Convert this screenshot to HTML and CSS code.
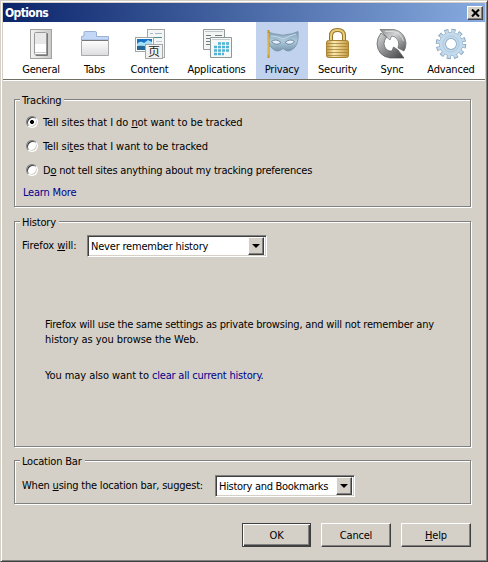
FILE: index.html
```
<!DOCTYPE html>
<html lang="en">
<head>
<meta charset="utf-8">
<title>Options</title>
<link rel="stylesheet" href="styles.css">
</head>
<body>
<div class="window">
  <header class="titlebar">
    <span class="title">Options</span>
    <button class="close" aria-label="Close"><svg width="9" height="8" viewBox="0 0 9 8"><path d="M1 .5L8 7.500M8 .5L1 7.500" stroke="#000" stroke-width="2.100"/></svg></button>
  </header>
  <nav class="toolbar">
    <div class="tab general">
      <svg width="32" height="32" viewBox="0 0 32 32">
        <defs><linearGradient id="gp" x2="1"><stop stop-color="#f2f2f1"/><stop offset="1" stop-color="#c9c9c8"/></linearGradient></defs>
        <rect x="5.500" y="1.500" width="21" height="29" fill="url(#gp)" stroke="#a2a29f"/>
        <rect x="10.500" y="5" width="12.500" height="23" rx="1" fill="#777"/>
        <rect x="9.500" y="4.500" width="12" height="22" rx="1" fill="#fff" stroke="#999"/>
        <rect x="10" y="5" width="11" height="11" fill="#e8e8e8"/>
        <path d="M10 24.500h11" stroke="#ccc"/>
      </svg>
      <span class="label">General</span>
    </div>
    <div class="tab tabs">
      <svg width="32" height="32" viewBox="0 0 32 32">
        <defs><linearGradient id="tp" x2="0" y2="1"><stop stop-color="#fff"/><stop offset="1" stop-color="#dcdcde"/></linearGradient></defs>
        <path d="M2.500 12V8.500L5 8V4.500Q5 3.500 6 3.500H16.500Q17.500 3.500 17.500 5V8.500H29.500V12Z" fill="#c3d7f7" stroke="#9bb0d2"/>
        <path d="M2.500 12.500H29.500V27.500H2.500Z" fill="url(#tp)" stroke="#a9a9ab"/>
        <path d="M3 12.500H29" stroke="#77777a"/>
      </svg>
      <span class="label">Tabs</span>
    </div>
    <div class="tab content">
      <svg width="32" height="32" viewBox="0 0 32 32">
        <rect x="13.500" y="1.500" width="17" height="28" fill="#f4f5f5" stroke="#a3a7a7"/>
        <path d="M21 5.500h7M16 5.500h3" stroke="#aab6cb"/>
        <path d="M16 9.500h12" stroke="#4c918e"/>
        <path d="M22 13.500h6" stroke="#c2cbd8"/>
        <rect x="1.500" y="9.500" width="18" height="14" fill="#fff" stroke="#a2a5a6"/>
        <path d="M3 11H18V22H3Z" fill="#1671c5"/>
        <path d="M3 16Q6 12 10 15L14 12L18 14V19H3Z" fill="#a5dff7"/>
        <path d="M3 18Q9 17 13 19H18V22H3Z" fill="#246694"/>
        <rect x="11.500" y="16.500" width="17" height="14" fill="#f1f2f2" stroke="#a5a8a8"/>
        <text x="14" y="28" class="glyph" lang="zh-CN">页</text>
      </svg>
      <span class="label">Content</span>
    </div>
    <div class="tab applications">
      <svg width="32" height="32" viewBox="0 0 32 32">
        <path d="M2.500 1.500H23.500V21.500H2.500Z" fill="#f3f5f5" stroke="#929b9b"/>
        <path d="M4 3.500H22" stroke="#c0c6c6"/>
        <path d="M5 7.500h5M5 10.500h4M5 13.500h5M5 16.500h4M14 7.500h7" stroke="#717c7d"/>
        <path d="M9.500 9.500H30.500V29.500H9.500Z" fill="#f6f8f8" stroke="#8c9797"/>
        <path d="M11 11.500H29" stroke="#c7cccd"/>
        <path d="M17 15.500H28M13 19H28M13 22.500H28M13 26H23" stroke="#50b2d4" stroke-width="2.500" stroke-dasharray="3 1"/>
      </svg>
      <span class="label">Applications</span>
    </div>
    <div class="tab privacy selected">
      <svg width="34" height="32" viewBox="0 0 34 32">
        <defs><linearGradient id="mp" x2="0" y2="1"><stop stop-color="#7e9fb9"/><stop offset=".5" stop-color="#b0c9da"/><stop offset="1" stop-color="#7596ae"/></linearGradient></defs>
        <path d="M3 4Q8 6 14 6.500Q18 8 22 6.500Q28 6 33 3.500Q34 14 30 19Q25 24.500 21 22.500L18 20.500L15 22.500Q10 24.500 6 19Q2 15 3 4Z" fill="url(#mp)" stroke="#7893a8" stroke-width=".8"/>
        <path d="M6.500 13.500Q11 10 16 14.500Q11 18.500 6.500 13.500ZM20 14.500Q25 10 29.500 13.500Q25 18.500 20 14.500Z" fill="#e6effa" stroke="#5f7c94" stroke-width=".8"/>
        <path d="M6 8Q13 8 18 11Q24 8 31 6" fill="none" stroke="#c3d8e5"/>
        <path d="M3.500 2V30" stroke="#c4942f" stroke-width="2"/><path d="M3 5V27" stroke="#f1ce66"/>
      </svg>
      <span class="label">Privacy</span>
    </div>
    <div class="tab security">
      <svg width="32" height="32" viewBox="0 0 32 32">
        <defs><linearGradient id="lp" x2="1"><stop stop-color="#c39a43"/><stop offset=".35" stop-color="#f8ebb2"/><stop offset="1" stop-color="#c4973c"/></linearGradient></defs>
        <path d="M9 14V8Q9 2 15.500 2T22 8V14" fill="none" stroke="#987329" stroke-width="4"/>
        <path d="M9 14V8Q9 2 15.500 2T22 8V14" fill="none" stroke="#e9ce7c" stroke-width="2"/>
        <rect x="4.500" y="12.500" width="22" height="17" rx="2" fill="url(#lp)" stroke="#aa8235"/>
        <path d="M5 15.500H26M5 18.500H26M5 21.500H26M5 24.500H26M5 27.500H26" stroke="#a88235" stroke-width=".8"/>
      </svg>
      <span class="label">Security</span>
    </div>
    <div class="tab sync">
      <svg width="32" height="32" viewBox="0 0 32 32">
        <defs>
          <linearGradient id="sa" x1="0" y1="0" x2="1" y2="1"><stop stop-color="#8d8f90"/><stop offset=".4" stop-color="#d3d4d5"/><stop offset="1" stop-color="#57595b"/></linearGradient>
          <linearGradient id="sb" x1="0" y1="0" x2="1" y2="1"><stop stop-color="#dcdddd"/><stop offset=".5" stop-color="#8a8c8e"/><stop offset="1" stop-color="#3e4042"/></linearGradient>
        </defs>
        <path d="M4 1.500H18Q29 4 30 15Q30 20 28 23L22 20Q24.500 12 18 8.500L15.500 8L14 12L10 8.500Z" fill="url(#sa)" stroke="#66686a" stroke-width=".7"/>
        <path d="M28 30H14Q2 28 1 16Q1 10 5 5L10.500 9Q5.500 16 10.500 21.500Q13 23.500 16 23L17.500 19L22 22Z" fill="url(#sb)" stroke="#55575a" stroke-width=".7"/>
        <path d="M9 3.500H17Q25 5 27.500 13" fill="none" stroke="#e4e5e5" stroke-width=".8"/>
      </svg>
      <span class="label">Sync</span>
    </div>
    <div class="tab advanced">
      <svg width="32" height="32" viewBox="0 0 32 32">
        <circle cx="16" cy="16" r="13" fill="none" stroke="#88a6c0" stroke-width="4.500" stroke-dasharray="4 2.807"/>
        <circle cx="16" cy="16" r="8.500" fill="none" stroke="#8caac4" stroke-width="7"/>
        <circle cx="16" cy="16" r="12.700" fill="none" stroke="#c3d9ec" stroke-width="3.200" stroke-dasharray="2.700 3.950" stroke-dashoffset="-.6"/>
        <circle cx="16" cy="16" r="8.700" fill="none" stroke="#c3d9ec" stroke-width="5.600"/>
        <circle cx="16" cy="16" r="8" fill="none" stroke="#afcae0"/>
      </svg>
      <span class="label">Advanced</span>
    </div>
  </nav>
  <main class="pane">
    <section class="group tracking">
      <h2 class="legend">Tracking</h2>
      <label class="radio"><span class="dot on"></span><span class="loose">Tell sites that I do <u>n</u>ot want to be tracked</span></label>
      <label class="radio"><span class="dot"></span><span class="loose">Tell si<u>t</u>es that I want to be tracked</span></label>
      <label class="radio"><span class="dot"></span><span>D<u>o</u> not tell sites anything about my tracking preferences</span></label>
      <a class="link learn">Learn More</a>
    </section>
    <section class="group history">
      <h2 class="legend">History</h2>
      <div class="field"><span class="caption loose">Firefox <u>w</u>ill:</span><div class="select wide"><span class="value">Never remember history</span><span class="arrow"></span></div></div>
      <p class="note">Firefox will use the same settings as private browsing, and will not remember any<br><span class="loose">history as you browse the Web.</span></p>
      <p class="note last"><span class="loose">You may also want to </span><a class="link">clear all current history</a>.</p>
    </section>
    <section class="group location">
      <h2 class="legend">Location Bar</h2>
      <div class="field"><span class="caption suggest">When <u>u</u>sing the location bar, suggest:</span><div class="select"><span class="value tight">History and Bookmarks</span><span class="arrow"></span></div></div>
    </section>
    <footer class="buttons">
      <button class="button default">OK</button>
      <button class="button">Cancel</button>
      <button class="button"><u>H</u>elp</button>
    </footer>
  </main>
</div>
</body>
</html>
```
FILE: styles.css
```
* { box-sizing: border-box; }
body { margin: 0; font: 11px/15px "DejaVu Sans Condensed", "DejaVu Sans", sans-serif; font-stretch: condensed; color: #000; letter-spacing: -.2px; }
.window { width: 488px; height: 562px; background: #d4d0c8; border: 1px solid; border-color: #d4d0c8 #404040 #404040 #d4d0c8; box-shadow: inset 1px 1px #fff, inset -1px -1px #808080; padding: 2px; white-space: nowrap; }
.titlebar { height: 19px; display: flex; align-items: center; justify-content: space-between; padding: 1px 2px 0 2px; background: linear-gradient(90deg, #0a246a, #87abe0); color: #fff; }
.title { font-weight: bold; font-size: 12px; letter-spacing: -.6px; }
.close { width: 16px; height: 14px; padding: 0; background: #d4d0c8; border: 1px solid; border-color: #fff #404040 #404040 #fff; box-shadow: inset -1px -1px #808080; display: flex; align-items: center; justify-content: center; }
.close svg { flex: none; }
.toolbar { display: flex; height: 57px; padding-left: 12px; background: #fff; }
.tab { display: flex; flex-direction: column; align-items: center; padding-top: 6px; }
.tab svg { display: block; height: 32px; flex: none; }
.label { line-height: 16px; margin-top: 2px; }
.general { width: 52px; }
.tabs { width: 55px; }
.content { width: 55px; }
.applications { width: 79px; }
.privacy { width: 52px; }
.security { width: 59px; }
.sync { width: 50px; }
.advanced { width: 68px; }
.selected { background: #c1d2ee; }
.glyph { font: 12px "Noto Sans CJK SC", sans-serif; letter-spacing: 0; fill: #292929; }
.pane { border-top: 1px solid #716f64; box-shadow: inset 0 1px #fff; padding: 19px 14px 0 11px; }
.group { border: 1px solid #808080; box-shadow: inset 1px 1px #fff, 1px 1px #fff; width: 457px; padding: 0 7px; }
.legend { font-size: 11px; font-weight: normal; margin: -7px 0 0 -2px; padding: 0 3px 0 2px; width: max-content; background: #d4d0c8; line-height: 15px; }
.tracking { height: 108px; }
.history { height: 226px; margin-top: 14px; }
.location { height: 44px; margin-top: 13px; }
.radio { display: flex; align-items: center; height: 24px; padding-left: 4px; gap: 5px; }
.legend + .radio { margin-top: 2px; }
.dot { width: 12px; height: 12px; border-radius: 50%; background: #fff; border: 1px solid; border-color: #808080 #fff #fff #808080; box-shadow: inset 1px 1px #404040, inset -1px -1px #d4d0c8; }
.on { background: radial-gradient(circle, #000 0 1.700px, #fff 2.300px); }
.loose { letter-spacing: -.07px; }
.tight { letter-spacing: -.3px; }
u { text-decoration: underline; text-decoration-thickness: 1px; text-underline-offset: 1px; text-decoration-skip-ink: none; }
.link { color: #00008b; }
.learn { display: block; margin: 3px 0 0 1px; }
.field { display: flex; align-items: center; margin-top: 5px; height: 22px; }
.location .field { margin-top: 6px; }
.caption { width: 65px; padding-bottom: 1px; }
.suggest { width: 193px; padding-bottom: 2px; }
.select { width: 140px; height: 22px; background: #fff; border: 1px solid; border-color: #808080 #fff #fff #808080; box-shadow: inset 1px 1px #404040, inset -1px -1px #d4d0c8; display: flex; align-items: center; justify-content: space-between; padding: 2px 2px 2px 3px; }
.wide { width: 180px; }
.arrow { width: 16px; height: 18px; background: #d4d0c8; border: 1px solid; border-color: #fff #404040 #404040 #fff; box-shadow: inset -1px -1px #808080; display: flex; align-items: center; justify-content: center; }
.arrow::before { content: ""; border: 4px solid transparent; border-top-color: #000; border-bottom: 0; }
.note { margin: 60px 0 0 23px; }
.last { margin-top: 21px; }
.buttons { display: flex; justify-content: flex-end; gap: 10px; margin-top: 19px; }
.button { width: 70px; height: 24px; padding: 0; font: inherit; letter-spacing: inherit; color: #000; background: #d4d0c8; border: 1px solid; border-color: #fff #404040 #404040 #fff; box-shadow: inset -1px -1px #808080; }
.default { width: 69px; border-color: #404040; box-shadow: inset 1px 1px #fff, inset -1px -1px #404040, inset -2px -2px #808080; }
```
